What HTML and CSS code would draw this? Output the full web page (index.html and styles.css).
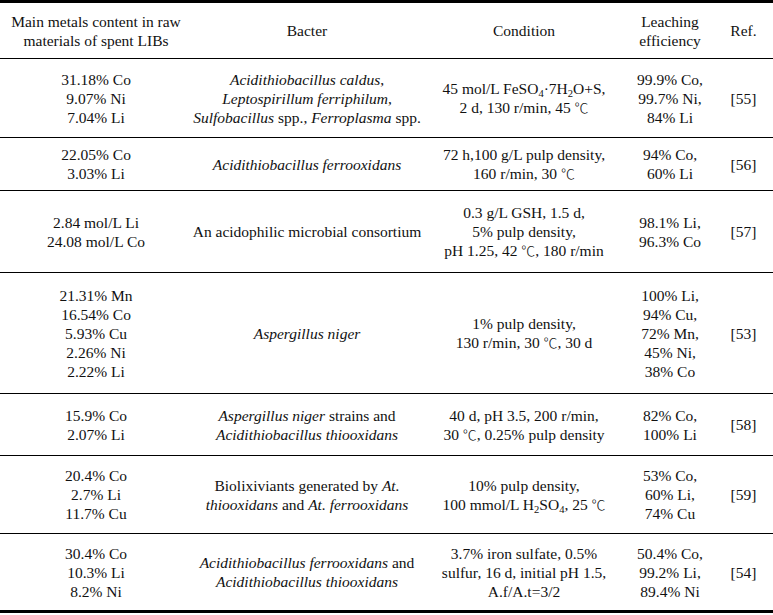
FILE: index.html
```html
<!DOCTYPE html>
<html lang="en">
<head>
<meta charset="utf-8">
<title>Bioleaching of spent LIBs</title>
<link rel="stylesheet" href="styles.css">
</head>
<body>
<div class="table">
  <div class="row head">
    <div class="cell">Main metals content in raw<br>materials of spent LIBs</div>
    <div class="cell">Bacter</div>
    <div class="cell">Condition</div>
    <div class="cell">Leaching<br>efficiency</div>
    <div class="cell">Ref.</div>
  </div>
  <div class="row r1">
    <div class="cell">31.18% Co<br>9.07% Ni<br>7.04% Li</div>
    <div class="cell"><i>Acidithiobacillus caldus</i>,<br><i>Leptospirillum ferriphilum</i>,<br><i>Sulfobacillus</i> spp., <i>Ferroplasma</i> spp.</div>
    <div class="cell">45 mol/L FeSO<sub>4</sub>·7H<sub>2</sub>O+S,<br>2 d, 130 r/min, 45 <span class="deg">℃</span></div>
    <div class="cell">99.9% Co,<br>99.7% Ni,<br>84% Li</div>
    <div class="cell">[55]</div>
  </div>
  <div class="row r2">
    <div class="cell">22.05% Co<br>3.03% Li</div>
    <div class="cell"><i>Acidithiobacillus ferrooxidans</i></div>
    <div class="cell">72 h,100 g/L pulp density,<br>160 r/min, 30 <span class="deg">℃</span></div>
    <div class="cell">94% Co,<br>60% Li</div>
    <div class="cell">[56]</div>
  </div>
  <div class="row r3">
    <div class="cell">2.84 mol/L Li<br>24.08 mol/L Co</div>
    <div class="cell">An acidophilic microbial consortium</div>
    <div class="cell">0.3 g/L GSH, 1.5 d,<br>5% pulp density,<br>pH 1.25, 42 <span class="deg">℃</span>, 180 r/min</div>
    <div class="cell">98.1% Li,<br>96.3% Co</div>
    <div class="cell">[57]</div>
  </div>
  <div class="row r4">
    <div class="cell">21.31% Mn<br>16.54% Co<br>5.93% Cu<br>2.26% Ni<br>2.22% Li</div>
    <div class="cell"><i>Aspergillus niger</i></div>
    <div class="cell">1% pulp density,<br>130 r/min, 30 <span class="deg">℃</span>, 30 d</div>
    <div class="cell">100% Li,<br>94% Cu,<br>72% Mn,<br>45% Ni,<br>38% Co</div>
    <div class="cell">[53]</div>
  </div>
  <div class="row r5">
    <div class="cell">15.9% Co<br>2.07% Li</div>
    <div class="cell"><i>Aspergillus niger</i> strains and<br><i>Acidithiobacillus thiooxidans</i></div>
    <div class="cell">40 d, pH 3.5, 200 r/min,<br>30 <span class="deg">℃</span>, 0.25% pulp density</div>
    <div class="cell">82% Co,<br>100% Li</div>
    <div class="cell">[58]</div>
  </div>
  <div class="row r6">
    <div class="cell">20.4% Co<br>2.7% Li<br>11.7% Cu</div>
    <div class="cell">Biolixiviants generated by <i>At.</i><br><i>thiooxidans</i> and <i>At. ferrooxidans</i></div>
    <div class="cell">10% pulp density,<br>100 mmol/L H<sub>2</sub>SO<sub>4</sub>, 25 <span class="deg">℃</span></div>
    <div class="cell">53% Co,<br>60% Li,<br>74% Cu</div>
    <div class="cell">[59]</div>
  </div>
  <div class="row r7">
    <div class="cell">30.4% Co<br>10.3% Li<br>8.2% Ni</div>
    <div class="cell"><i>Acidithiobacillus ferrooxidans</i> and<br><i>Acidithiobacillus thiooxidans</i></div>
    <div class="cell">3.7% iron sulfate, 0.5%<br>sulfur, 16 d, initial pH 1.5,<br>A.f/A.t=3/2</div>
    <div class="cell">50.4% Co,<br>99.2% Li,<br>89.4% Ni</div>
    <div class="cell">[54]</div>
  </div>
</div>
</body>
</html>
```
FILE: styles.css
```css
html, body {
  margin: 0;
  padding: 0;
  background: #ffffff;
}

body {
  font-family: "Liberation Serif", "Times New Roman", "DejaVu Serif", serif;
  font-size: 15.5px;
  line-height: 19px;
  color: #111111;
}

.table {
  width: 773px;
  border-top: 3px solid #000000;
  border-bottom: 3px solid #000000;
}

.row {
  display: grid;
  grid-template-columns: 192px 230px 204px 88px 59px;
  align-items: center;
  box-sizing: border-box;
  border-bottom: 1px solid #000000;
}

.row .cell {
  text-align: center;
  white-space: nowrap;
}

.head { height: 56px; }
.r1 { height: 79px; }
.r2 { height: 53px; }
.r3 { height: 82px; }
.r4 { height: 121px; }
.r5 { height: 62px; }
.r6 { height: 78px; }
.r7 { height: 76px; border-bottom: none; }

sub {
  font-size: 0.68em;
  line-height: 0;
  vertical-align: -0.3em;
}

.deg {
  font-family: "Noto Sans CJK SC", "Noto Sans CJK JP", sans-serif;
  font-weight: 300;
  font-size: 0.9em;
}
```
